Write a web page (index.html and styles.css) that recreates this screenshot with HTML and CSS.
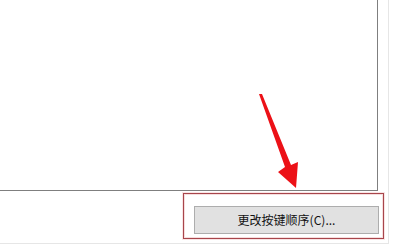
FILE: index.html
```html
<!DOCTYPE html>
<html>
<head>
<meta charset="utf-8">
<link rel="stylesheet" href="styles.css">
</head>
<body>
<div class="window">
  <div class="list"></div>
  <div class="footer">
    <div class="highlight">
      <button class="btn">更改按键顺序(C)...</button>
    </div>
  </div>
</div>
<svg class="arrow" width="404" height="252" viewBox="0 0 404 252">
  <polygon points="259,94 262,94 291,165 298,162 296,188 278,172 285,167" fill="#ec1117"/>
</svg>
</body>
</html>
```
FILE: styles.css
```css
html, body {
  margin: 0;
  padding: 0;
  background: #ffffff;
  width: 404px;
  height: 252px;
  overflow: hidden;
  font-family: "Noto Sans CJK SC", sans-serif;
}
.window {
  width: 388px;
  height: 243px;
  border-right: 1px solid #e6e6e6;
  border-bottom: 1px solid #e6e6e6;
  display: flex;
  flex-direction: column;
}
.list {
  width: 377px;
  height: 190px;
  border-right: 1px solid #7f7f7f;
  border-bottom: 1px solid #7f7f7f;
  background: #ffffff;
}
.footer {
  padding-top: 2px;
  padding-left: 183px;
}
.highlight {
  box-sizing: border-box;
  width: 201px;
  height: 46px;
  padding: 12px 4px 0 10px;
  border: 1px solid #a8454b;
  box-shadow: inset 0 0 0 1px #f6dede, 0 0 0 1px #f8e4e4;
}
.btn {
  display: flex;
  align-items: center;
  justify-content: center;
  width: 185px;
  height: 28px;
  margin: 0;
  padding: 0 0 1px 0;
  border: 1px solid #adadad;
  background: #e1e1e1;
  color: #111111;
  font-family: "Noto Sans CJK SC", sans-serif;
  font-size: 12px;
  line-height: 14px;
}
.arrow {
  position: absolute;
  left: 0;
  top: 0;
  pointer-events: none;
}
```
